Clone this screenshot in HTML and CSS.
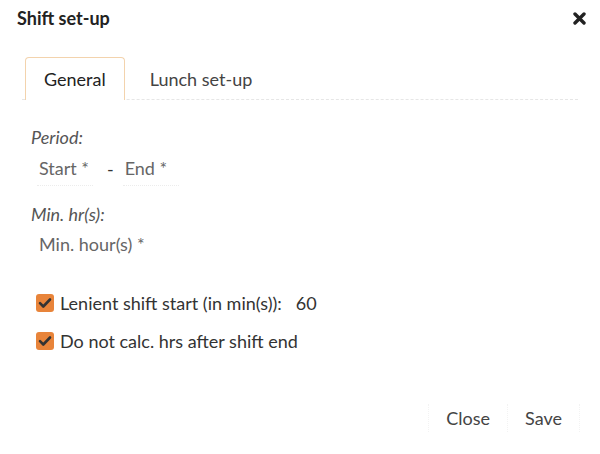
FILE: index.html
```html
<!DOCTYPE html>
<html lang="en">
<head>
    <meta charset="UTF-8">
    <title>Shift set-up</title>
    <link rel="stylesheet" href="styles.css">
</head>
<body>
    <div class="dialog">
        <header class="dialog-head">
            <h3>Shift set-up</h3>
            <svg class="close-x" width="13" height="13" viewBox="0 0 13 13"><path d="M2 2 L11 11 M11 2 L2 11" stroke="#222" stroke-width="3.4" stroke-linecap="round"/></svg>
        </header>
        <ul class="tabs">
            <li class="tab active">General</li>
            <li class="tab">Lunch set-up</li>
        </ul>
        <section class="body">
            <p class="label">Period:</p>
            <div class="period">
                <span class="field">Start *</span>
                <span class="dash">-</span>
                <span class="field">End *</span>
            </div>
            <p class="label">Min. hr(s):</p>
            <div class="minhr">Min. hour(s) *</div>
            <div class="checks">
                <label class="check"><span class="box"><svg width="18" height="18" viewBox="0 0 18 18"><path d="M4 9.2 L7.3 12.5 L14 5.5" fill="none" stroke="#333" stroke-width="2.6" stroke-linecap="round" stroke-linejoin="round"/></svg></span>Lenient shift start (in min(s)): <span class="val">60</span></label>
                <label class="check"><span class="box"><svg width="18" height="18" viewBox="0 0 18 18"><path d="M4 9.2 L7.3 12.5 L14 5.5" fill="none" stroke="#333" stroke-width="2.6" stroke-linecap="round" stroke-linejoin="round"/></svg></span>Do not calc. hrs after shift end</label>
            </div>
        </section>
        <footer class="actions">
            <button>Close</button>
            <button>Save</button>
        </footer>
    </div>
</body>
</html>
```
FILE: styles.css
```css
*{
    margin: 0;
    padding: 0;
    box-sizing: border-box;
    font-family: Lato, "Open Sans", sans-serif;
}

body{
    background-color: #fff;
    color: #333;
}

.dialog{
    width: 600px;
    height: 454px;
    display: flex;
    flex-direction: column;
}

.dialog-head{
    display: flex;
    justify-content: space-between;
    align-items: center;
    padding: 6px 14px 0 17px;
    height: 30px;
}
.dialog-head h3{
    font-size: 18px;
    font-weight: bold;
    color: #222;
}
.close-x{
    display: block;
}

.tabs{
    list-style: none;
    display: flex;
    margin: 27px 22px 0 22px;
    border-bottom: 1px dashed #e6e6e6;
    height: 43px;
    padding-left: 3px;
}
.tab{
    font-size: 18px;
    padding: 0 24px;
    line-height: 42px;
    color: #444;
    border: 1px solid transparent;
    border-bottom: 0;
    border-radius: 4px 4px 0 0;
}
.tab.active{
    border-color: #f3d3ad;
    color: #222;
    background: #fff;
    margin-bottom: -1px;
    padding: 0 18px;
}

.body{
    padding: 26px 0 0 31px;
}
.label{
    font-style: italic;
    font-size: 18px;
    color: #555;
    line-height: 22px;
}
.period{
    display: flex;
    align-items: center;
    margin: 3px 0 0 6px;
}
.field{
    font-size: 18px;
    color: #666;
    width: 56px;
    padding-left: 2px;
    line-height: 34px;
    border-bottom: 1px dotted #ececec;
}
.dash{
    font-size: 18px;
    margin: 0 9px 0 14px;
    color: #333;
}
.period + .label{
    margin-top: 17px;
}
.minhr{
    font-size: 18px;
    color: #666;
    margin: 8px 0 0 8px;
    line-height: 22px;
}

.checks{
    margin: 34px 0 0 5px;
    display: flex;
    flex-direction: column;
    gap: 10px;
}
.check{
    display: flex;
    align-items: center;
    font-size: 18px;
    color: #333;
    line-height: 28px;
}
.box{
    width: 18px;
    height: 18px;
    border-radius: 3px;
    background-color: #e8843a;
    margin-right: 6px;
}
.box svg{
    display: block;
}
.val{
    margin-left: 14px;
}

.actions{
    margin-top: auto;
    display: flex;
    justify-content: flex-end;
    padding: 0 20px 22px 0;
}
.actions button{
    font-size: 18px;
    color: #444;
    background: none;
    border: 1px dotted #f3f3f3;
    border-top: 0;
    border-bottom: 0;
    padding: 0 17px;
    height: 28px;
}
.actions button + button{
    border-left: 0;
}
```
